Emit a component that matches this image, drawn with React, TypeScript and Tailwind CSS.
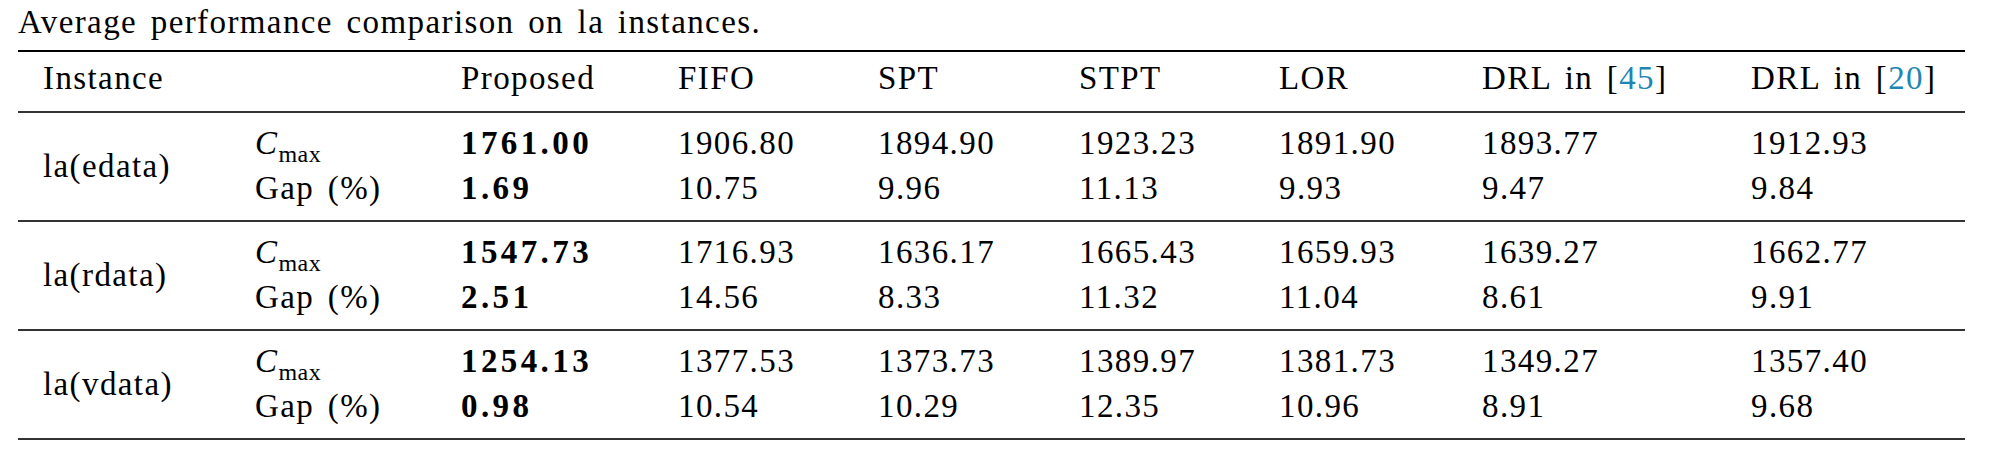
type Row = {
  name: string;
  cmax: string[];
  gap: string[];
};

const rows: Row[] = [
  {
    name: "la(edata)",
    cmax: ["1761.00", "1906.80", "1894.90", "1923.23", "1891.90", "1893.77", "1912.93"],
    gap: ["1.69", "10.75", "9.96", "11.13", "9.93", "9.47", "9.84"],
  },
  {
    name: "la(rdata)",
    cmax: ["1547.73", "1716.93", "1636.17", "1665.43", "1659.93", "1639.27", "1662.77"],
    gap: ["2.51", "14.56", "8.33", "11.32", "11.04", "8.61", "9.91"],
  },
  {
    name: "la(vdata)",
    cmax: ["1254.13", "1377.53", "1373.73", "1389.97", "1381.73", "1349.27", "1357.40"],
    gap: ["0.98", "10.54", "10.29", "12.35", "10.96", "8.91", "9.68"],
  },
];

const cols = "grid grid-cols-[212px_206px_217px_200px_201px_200px_203px_269px_239px]";

function Cite({ n }: { n: string }) {
  return (
    <span>
      [<span className="text-[#1f86b3]">{n}</span>]
    </span>
  );
}

export default function App() {
  return (
    <div className="bg-white w-[1995px] h-[459px] pl-[18px] text-black text-[33px] leading-[45px] tracking-[1.4px] [word-spacing:4px] font-['Liberation_Serif',serif]">
      <div className="h-[50px]">Average performance comparison on la instances.</div>

      <div className="w-[1947px] border-t-2 border-black">
        {/* header */}
        <div className={`${cols} pt-[4px] pb-[10px] border-b-2 border-[#333]`}>
          <div className="pl-[25px]">Instance</div>
          <div />
          <div className="pl-[25px]">Proposed</div>
          <div className="pl-[25px]">FIFO</div>
          <div className="pl-[25px]">SPT</div>
          <div className="pl-[25px]">STPT</div>
          <div className="pl-[25px]">LOR</div>
          <div className="pl-[25px]">
            DRL in <Cite n="45" />
          </div>
          <div className="pl-[25px]">
            DRL in <Cite n="20" />
          </div>
        </div>

        {rows.map((r) => (
          <div key={r.name} className={`${cols} h-[109px] pt-[8px] pb-[9px] border-b-2 border-[#333]`}>
            <div className="pl-[25px] flex items-center">{r.name}</div>
            <div className="pl-[25px] flex flex-col">
              <div>
                <span className="italic">C</span>
                <span className="text-[24px] leading-none align-[-8px] tracking-[0.5px]">max</span>
              </div>
              <div>Gap (%)</div>
            </div>
            {r.cmax.map((v, i) => (
              <div key={i} className={`pl-[25px] flex flex-col ${i === 0 ? "font-bold tracking-[3.4px]" : ""}`}>
                <div>{v}</div>
                <div>{r.gap[i]}</div>
              </div>
            ))}
          </div>
        ))}
      </div>
    </div>
  );
}
